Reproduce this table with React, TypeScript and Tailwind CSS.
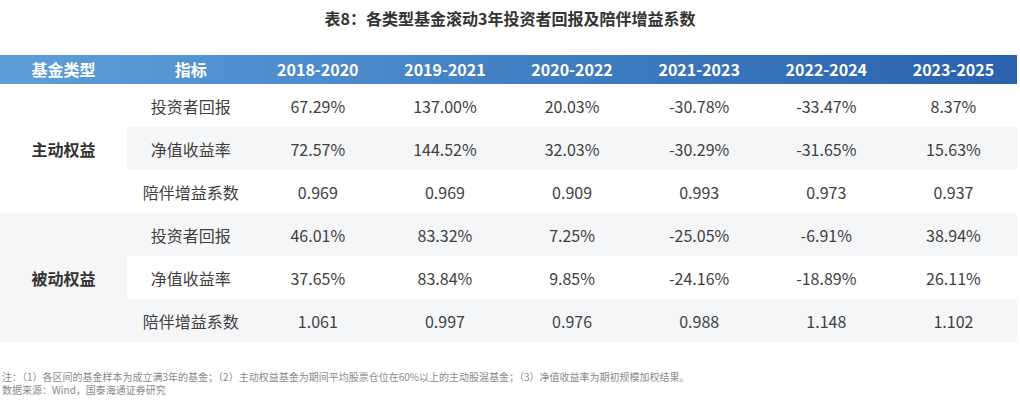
const headers = ['基金类型', '指标', '2018-2020', '2019-2021', '2020-2022', '2021-2023', '2022-2024', '2023-2025']

const groups = [
  {
    name: '主动权益',
    rows: [
      { label: '投资者回报', values: ['67.29%', '137.00%', '20.03%', '-30.78%', '-33.47%', '8.37%'] },
      { label: '净值收益率', values: ['72.57%', '144.52%', '32.03%', '-30.29%', '-31.65%', '15.63%'] },
      { label: '陪伴增益系数', values: ['0.969', '0.969', '0.909', '0.993', '0.973', '0.937'] },
    ],
  },
  {
    name: '被动权益',
    rows: [
      { label: '投资者回报', values: ['46.01%', '83.32%', '7.25%', '-25.05%', '-6.91%', '38.94%'] },
      { label: '净值收益率', values: ['37.65%', '83.84%', '9.85%', '-24.16%', '-18.89%', '26.11%'] },
      { label: '陪伴增益系数', values: ['1.061', '0.997', '0.976', '0.988', '1.148', '1.102'] },
    ],
  },
]

export default function App() {
  return (
    <div className="h-[416px] w-[1020px] overflow-hidden bg-white font-['Noto_Sans_CJK_SC','Noto_Sans',sans-serif]">
      <div className="flex h-[55px] justify-center pt-[5px]">
        <h1 className="text-[16px] leading-[26px] font-bold text-[#333]">
          表8：各类型基金滚动3年投资者回报及陪伴增益系数
        </h1>
      </div>

      <div className="w-[1017px]">
        <div className="grid h-[29px] grid-cols-8 items-center bg-gradient-to-r from-[#5e9fd9] to-[#2a62ad] text-[16px] font-bold text-white">
          {headers.map((h) => (
            <div key={h} className="text-center leading-[29px]">
              {h}
            </div>
          ))}
        </div>

        {groups.map((group, gi) => (
          <div key={group.name} className="grid grid-cols-8 grid-rows-3">
            <div
              className={
                gi === 1
                  ? 'row-span-3 flex items-center justify-center bg-[#f5f6f8] text-[16px] font-bold text-[#333]'
                  : 'row-span-3 flex items-center justify-center bg-white text-[16px] font-bold text-[#333]'
              }
            >
              {group.name}
            </div>
            {group.rows.map((row, ri) => (
              <div
                key={row.label}
                className={
                  (gi * 3 + ri) % 2 === 1
                    ? 'col-span-7 grid h-[43px] grid-cols-7 items-center bg-[#f5f6f8] text-[16px] text-[#404040]'
                    : 'col-span-7 grid h-[43px] grid-cols-7 items-center bg-white text-[16px] text-[#404040]'
                }
              >
                <div className="text-center">{row.label}</div>
                {row.values.map((v, vi) => (
                  <div key={vi} className="text-center">
                    {v}
                  </div>
                ))}
              </div>
            ))}
          </div>
        ))}
      </div>

      <div className="mt-[28px] pl-[2px] text-[10px] leading-[13px] text-[#8a8a8a]">
        <p>注：（1）各区间的基金样本为成立满3年的基金；（2）主动权益基金为期间平均股票仓位在60%以上的主动股混基金；（3）净值收益率为期初规模加权结果。</p>
        <p>数据来源：Wind，国泰海通证券研究</p>
      </div>
    </div>
  )
}
